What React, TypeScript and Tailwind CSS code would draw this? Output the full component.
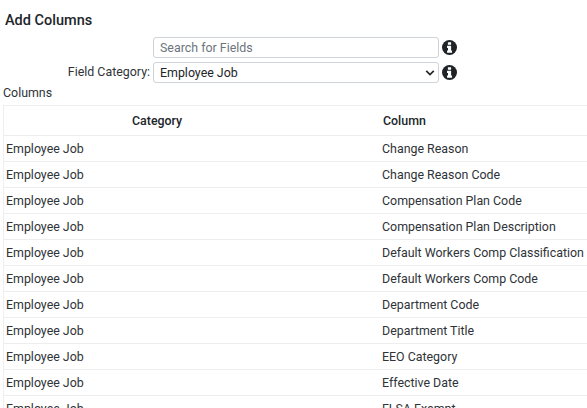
import React from 'react';

const COLUMNS = [
  'Change Reason',
  'Change Reason Code',
  'Compensation Plan Code',
  'Compensation Plan Description',
  'Default Workers Comp Classification',
  'Default Workers Comp Code',
  'Department Code',
  'Department Title',
  'EEO Category',
  'Effective Date',
  'FLSA Exempt',
];

const InfoIcon: React.FC = () => (
  <svg viewBox="0 0 16 16" className="ml-[3px] h-[15px] w-[15px] shrink-0">
    <circle cx="8" cy="8" r="8" fill="#1f2327" />
    <path
      d="M6.3 2.4H9.7V5H6.3ZM5.4 6.1H9.7V11.2H10.7V13.5H5.4V11.2H6.4V8.4H5.4Z"
      fill="#ffffff"
    />
  </svg>
);

const App: React.FC = () => {
  return (
    <div className="h-screen overflow-hidden bg-white font-['Roboto',sans-serif] text-[12.4px] text-[#2f3337]">
      <h1 className="pt-[12px] pl-[5px] text-[14.5px] leading-[17px] font-medium text-[#212529]">Add Columns</h1>

      <div className="mt-[8px] flex items-center">
        <div className="w-[153px] shrink-0" />
        <input
          placeholder="Search for Fields"
          className="h-[21px] w-[286px] rounded-[3px] border border-[#ced4da] px-[6px] text-[12.4px] placeholder:text-[#6c757d]"
        />
        <InfoIcon />
      </div>

      <div className="mt-[4px] flex items-center">
        <label className="w-[153px] shrink-0 pr-[3px] text-right">Field Category:</label>
        <div className="relative h-[21px] w-[286px] rounded-[3px] border border-[#ced4da] pl-[6px] leading-[20px] text-[#212529]">
          Employee Job
          <svg viewBox="0 0 12 12" className="absolute top-[5px] right-[3px] h-[10px] w-[10px]">
            <path d="M1.5 3.5 L6 8 L10.5 3.5" fill="none" stroke="#212529" strokeWidth="2" />
          </svg>
        </div>
        <InfoIcon />
      </div>

      <div className="mt-[2px] pl-[3px] leading-[15px]">Columns</div>

      <div className="mt-[5px] ml-[3px] w-[700px] border-t border-l border-[#eeeeee]">
        <div className="flex h-[30px] items-center border-b border-[#eeeeee] pt-[2px] font-medium text-[#212529]">
          <div className="w-[378px] shrink-0 pl-[128px]">Category</div>
          <div className="pl-[1px]">Column</div>
        </div>
        {COLUMNS.map((column) => (
          <div key={column} className="flex h-[26px] items-center border-b border-[#eeeeee] pt-[2px]">
            <div className="w-[378px] shrink-0 pl-[2px]">Employee Job</div>
            <div>{column}</div>
          </div>
        ))}
      </div>
    </div>
  );
};

export default App;
